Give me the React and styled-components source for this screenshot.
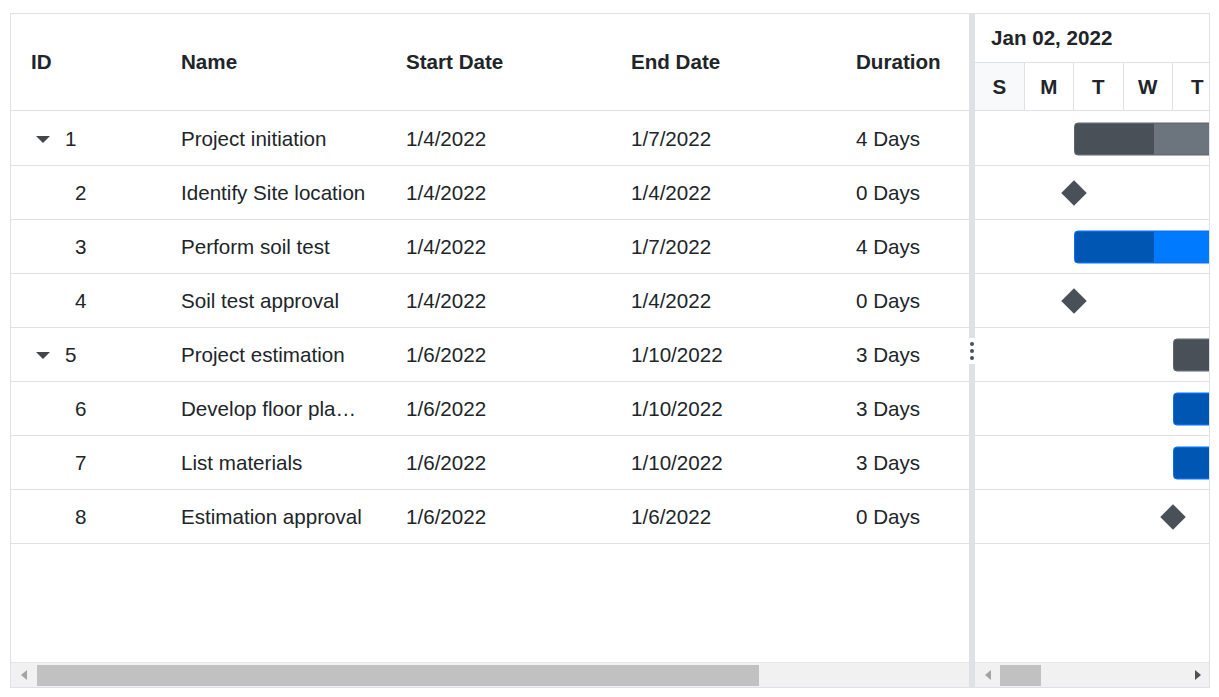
import React from 'react'
import styled, { createGlobalStyle } from 'styled-components'

const DAY_WIDTH = 49.5
const DAYS = ['S', 'M', 'T', 'W', 'T', 'F', 'S']

const tasks = [
    { id: 1, name: 'Project initiation', start: '1/4/2022', end: '1/7/2022', duration: '4 Days', parent: true, day: 2, span: 4, progress: 40 },
    { id: 2, name: 'Identify Site location', start: '1/4/2022', end: '1/4/2022', duration: '0 Days', milestone: true, day: 2 },
    { id: 3, name: 'Perform soil test', start: '1/4/2022', end: '1/7/2022', duration: '4 Days', day: 2, span: 4, progress: 40 },
    { id: 4, name: 'Soil test approval', start: '1/4/2022', end: '1/4/2022', duration: '0 Days', milestone: true, day: 2 },
    { id: 5, name: 'Project estimation', start: '1/6/2022', end: '1/10/2022', duration: '3 Days', parent: true, day: 4, span: 3, progress: 40 },
    { id: 6, name: 'Develop floor plan for estimation', start: '1/6/2022', end: '1/10/2022', duration: '3 Days', day: 4, span: 3, progress: 40 },
    { id: 7, name: 'List materials', start: '1/6/2022', end: '1/10/2022', duration: '3 Days', day: 4, span: 3, progress: 40 },
    { id: 8, name: 'Estimation approval', start: '1/6/2022', end: '1/6/2022', duration: '0 Days', milestone: true, day: 4 },
]

const columns = [
    { key: 'id', title: 'ID', width: 150 },
    { key: 'name', title: 'Name', width: 225 },
    { key: 'start', title: 'Start Date', width: 225 },
    { key: 'end', title: 'End Date', width: 225 },
    { key: 'duration', title: 'Duration', width: 133 },
]

const TaskBar = ({ task }) => {
    if (task.milestone) {
        return <Milestone style={{ left: task.day * DAY_WIDTH - 9 }} />
    }
    const width = task.span * DAY_WIDTH
    return (
        <Bar $parent={task.parent} style={{ left: task.day * DAY_WIDTH, width }}>
            <Progress $parent={task.parent} style={{ width: (width * task.progress) / 100 }} />
        </Bar>
    )
}

const ScrollBar = ({ thumbLeft, thumbWidth, showRight }) => (
    <Scroll>
        <ArrowBox $w={thumbLeft}>
            <ArrowLeft />
        </ArrowBox>
        <Thumb $w={thumbWidth} />
        <Spacer />
        {showRight && (
            <ArrowBox $w={22}>
                <ArrowRight />
            </ArrowBox>
        )}
    </Scroll>
)

export default function App() {
    return (
        <>
            <GlobalStyle />
            <Page>
                <Gantt>
                    <GridPane>
                        <GridHeader>
                            {columns.map((col) => (
                                <HeaderCell key={col.key} $w={col.width}>{col.title}</HeaderCell>
                            ))}
                        </GridHeader>

                        <Body>
                            {tasks.map((task) => (
                                <Row key={task.id}>
                                    <Cell $w={150}>
                                        {task.parent ? <Caret /> : <Indent />}
                                        {task.id}
                                    </Cell>
                                    <Cell $w={225} $pr={19.5}><Ellipsis>{task.name}</Ellipsis></Cell>
                                    <Cell $w={225}>{task.start}</Cell>
                                    <Cell $w={225}>{task.end}</Cell>
                                    <Cell $w={133}>{task.duration}</Cell>
                                </Row>
                            ))}
                        </Body>

                        <ScrollBar thumbLeft={26} thumbWidth={722} />
                    </GridPane>

                    <Splitter>
                        <Grip>
                            <Dot />
                            <Dot />
                            <Dot />
                        </Grip>
                    </Splitter>

                    <ChartPane>
                        <MonthRow>Jan 02, 2022</MonthRow>
                        <DayRow>
                            {DAYS.map((d, i) => (
                                <DayCell key={i} $weekend={i === 0 || i === 6}>{d}</DayCell>
                            ))}
                        </DayRow>

                        <Body>
                            {tasks.map((task) => (
                                <ChartRow key={task.id}>
                                    <TaskBar task={task} />
                                </ChartRow>
                            ))}
                        </Body>

                        <ScrollBar thumbLeft={25} thumbWidth={41} showRight />
                    </ChartPane>
                </Gantt>
            </Page>
        </>
    )
}


const GlobalStyle = createGlobalStyle`
    body {
        margin: 0;
        background: #fff;
        font-family: "Liberation Sans", Arial, sans-serif;
        color: #212529;
    }
`

const Page = styled.div`
    padding: 13px 0 0 10px;
`

const Gantt = styled.div`
    box-sizing: border-box;
    width: 1200px;
    height: 675px;
    border: 1px solid #dee2e6;
    display: flex;
    overflow: hidden;
`

const GridPane = styled.div`
    width: 958px;
    flex-shrink: 0;
    display: flex;
    flex-direction: column;
`

const GridHeader = styled.div`
    box-sizing: border-box;
    height: 97px;
    border-bottom: 1px solid #dee2e6;
    display: flex;
    align-items: center;
`

const HeaderCell = styled.div`
    box-sizing: border-box;
    width: ${(p) => p.$w}px;
    padding-left: 20px;
    font-size: 20.6px;
    font-weight: 700;
    color: #212529;
    white-space: nowrap;
`

const Body = styled.div`
    flex: 1;
    padding-top: 1px;
`

const Row = styled.div`
    box-sizing: border-box;
    height: 54px;
    border-bottom: 1px solid #dee2e6;
    display: flex;
    align-items: center;
    padding-top: 1px;
`

const Cell = styled.div`
    box-sizing: border-box;
    width: ${(p) => p.$w}px;
    padding: 0 ${(p) => p.$pr || 8}px 0 20px;
    display: flex;
    align-items: center;
    font-size: 20.6px;
    color: #212529;
    white-space: nowrap;
`

const Ellipsis = styled.span`
    overflow: hidden;
    text-overflow: ellipsis;
    white-space: nowrap;
`

const Caret = styled.span`
    width: 23px;
    margin-right: 11px;
    display: flex;
    justify-content: center;

    &::before {
        content: "";
        border-left: 7.5px solid transparent;
        border-right: 7.5px solid transparent;
        border-top: 7px solid #43474c;
    }
`

const Indent = styled.span`
    width: 44px;
`

const Splitter = styled.div`
    width: 6px;
    flex-shrink: 0;
    background: #dee2e6;
    display: flex;
    align-items: center;
    justify-content: center;
`

const Grip = styled.div`
    width: 6px;
    height: 26px;
    background: #fff;
    display: flex;
    flex-direction: column;
    align-items: center;
    justify-content: center;
    gap: 3px;
`

const Dot = styled.span`
    width: 4px;
    height: 4px;
    border-radius: 50%;
    background: #495057;
`

const ChartPane = styled.div`
    flex: 1;
    min-width: 0;
    display: flex;
    flex-direction: column;
    overflow: hidden;
`

const MonthRow = styled.div`
    box-sizing: border-box;
    height: 49px;
    border-bottom: 1px solid #dee2e6;
    padding-left: 16px;
    display: flex;
    align-items: center;
    font-size: 20.6px;
    font-weight: 700;
    white-space: nowrap;
`

const DayRow = styled.div`
    box-sizing: border-box;
    height: 48px;
    border-bottom: 1px solid #dee2e6;
    display: flex;
`

const DayCell = styled.div`
    box-sizing: border-box;
    width: ${DAY_WIDTH}px;
    flex-shrink: 0;
    border-right: 1px solid #dee2e6;
    background: ${(p) => (p.$weekend ? '#f8f9fa' : '#fff')};
    display: flex;
    align-items: center;
    justify-content: center;
    font-size: 20.6px;
    font-weight: 700;
`

const ChartRow = styled.div`
    position: relative;
    box-sizing: border-box;
    height: 54px;
    border-bottom: 1px solid #dee2e6;
`

const Bar = styled.div`
    position: absolute;
    top: 50%;
    transform: translateY(-50%);
    box-sizing: border-box;
    height: 33px;
    border-radius: 4px;
    overflow: hidden;
    background: ${(p) => (p.$parent ? '#6c757d' : '#007bff')};
    border: 1px solid ${(p) => (p.$parent ? '#5f656b' : '#0a6ef5')};
`

const Progress = styled.div`
    height: 100%;
    background: ${(p) => (p.$parent ? '#495057' : '#0056b3')};
`

const Milestone = styled.div`
    position: absolute;
    top: 50%;
    width: 18px;
    height: 18px;
    margin-top: -9px;
    background: #495057;
    transform: rotate(45deg);
`

const Scroll = styled.div`
    box-sizing: border-box;
    height: 25px;
    flex-shrink: 0;
    background: #f1f1f1;
    border-top: 1px solid #e6e6e6;
    display: flex;
    align-items: center;
`

const ArrowBox = styled.div`
    width: ${(p) => p.$w}px;
    flex-shrink: 0;
    display: flex;
    justify-content: center;
    align-items: center;
`

const ArrowLeft = styled.span`
    border-top: 5px solid transparent;
    border-bottom: 5px solid transparent;
    border-right: 6px solid #a3a3a3;
`

const ArrowRight = styled.span`
    border-top: 5px solid transparent;
    border-bottom: 5px solid transparent;
    border-left: 6px solid #505050;
`

const Thumb = styled.div`
    width: ${(p) => p.$w}px;
    height: 21px;
    background: #c1c1c1;
`

const Spacer = styled.div`
    flex: 1;
`
